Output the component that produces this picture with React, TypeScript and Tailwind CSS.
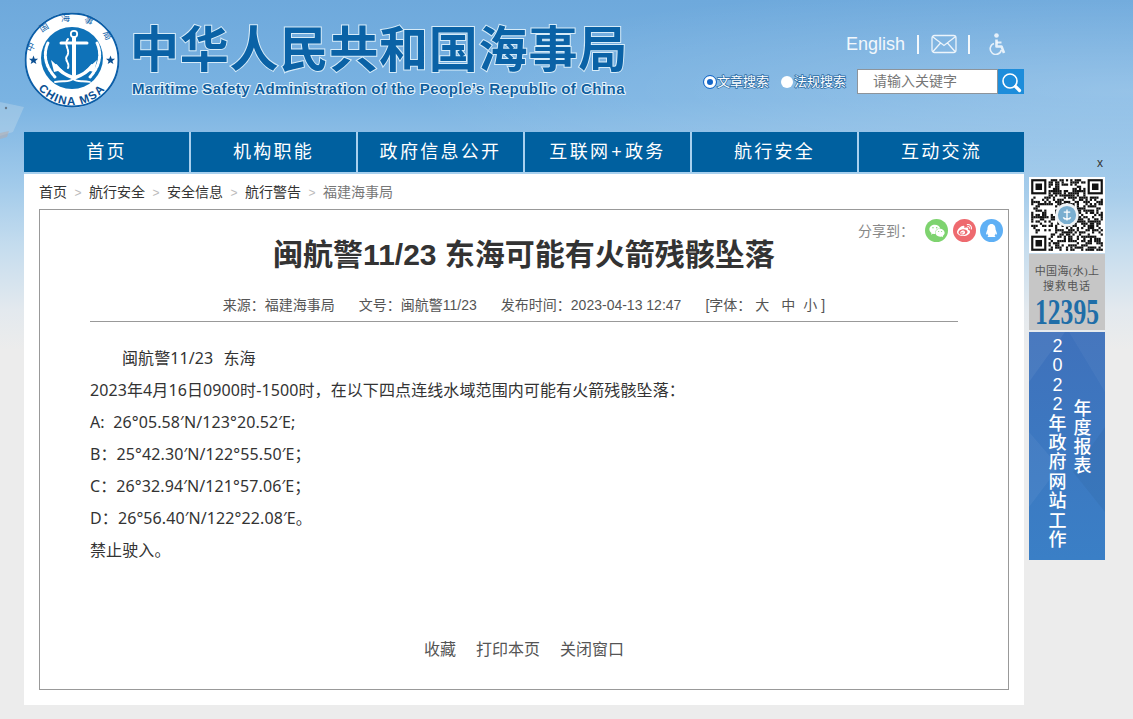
import React from 'react'
import { FaQq, FaWeibo, FaWeixin } from 'react-icons/fa'

const navItems: React.ReactNode[] = [
  '首页',
  '机构职能',
  '政府信息公开',
  <>互联网<span className="mx-[1px]">+</span>政务</>,
  '航行安全',
  '互动交流',
]
const crumbs = ['航行安全', '安全信息', '航行警告']
const bodyLines = [
  '2023年4月16日0900时-1500时，在以下四点连线水域范围内可能有火箭残骸坠落：',
  'A:  26°05.58′N/123°20.52′E;',
  'B：25°42.30′N/122°55.50′E；',
  'C：26°32.94′N/121°57.06′E；',
  'D：26°56.40′N/122°22.08′E。',
  '禁止驶入。',
]

const MsaLogo = ({ size = 96 }: { size?: number }) => (
  <svg width={size} height={size} viewBox="0 0 96 96">
    <defs>
      <path id="logoTop" d="M 8.5 48 A 39.5 39.5 0 0 1 87.5 48" />
      <path id="logoBottom" d="M 5 50 A 43 43 0 0 0 91 50" />
    </defs>
    <circle cx="48" cy="48" r="47.5" fill="#fff" />
    <circle cx="48" cy="48" r="46.5" fill="none" stroke="#0b5ea8" strokeWidth="2" />
    <circle cx="48" cy="46" r="31" fill="#0f72b8" />
    <text fontSize="9" fill="#0b5ea8" fontFamily="'Noto Sans CJK SC',sans-serif">
      <textPath href="#logoTop" startOffset="50%" textAnchor="middle" letterSpacing="13">中国海事局</textPath>
    </text>
    <text fontSize="11.5" fontWeight="700" fill="#0b4f92" fontFamily="'Liberation Sans',sans-serif">
      <textPath href="#logoBottom" startOffset="50%" textAnchor="middle" letterSpacing="1.4">CHINA MSA</textPath>
    </text>
    <polygon points="9,44 10.2,47.2 13.6,47.3 10.9,49.4 11.9,52.6 9,50.7 6.2,52.6 7.1,49.4 4.5,47.3 7.8,47.2" fill="#0b4f92" transform="translate(0.5 -0.5)" />
    <polygon points="87,44 88.2,47.2 91.6,47.3 88.9,49.4 89.9,52.6 87,50.7 84.2,52.6 85.1,49.4 82.5,47.3 85.8,47.2" fill="#0b4f92" transform="translate(-0.5 -0.5)" />
    <g fill="none" stroke="#fff" strokeLinecap="round">
      <circle cx="50" cy="22" r="3.2" strokeWidth="1.8" />
      <path d="M50 26V63" strokeWidth="4" />
      <path d="M37 31H63" strokeWidth="3" />
      <path d="M32 54C37 61 44 64 50 66C56 64 63 61 68 54" strokeWidth="3.6" />
      <path d="M44 27C39 33 47 38 43 44C40 48 46 51 44 56" strokeWidth="2" strokeDasharray="2.4 1.2" />
      <path d="M24 31C19 42 21 54 31 65" strokeWidth="3" strokeDasharray="3 1.4" />
      <path d="M73 31C78 42 76 54 66 65" strokeWidth="3" strokeDasharray="3 1.4" />
      <path d="M31 70C40 68 44 71 49 67C54 71 58 68 66 70" strokeWidth="1.8" />
    </g>
    <polygon points="27,48 38,58 30,60" fill="#fff" />
    <polygon points="73,48 62,58 70,60" fill="#fff" />
  </svg>
)

const QrCode = () => {
  const n = 33
  const cells: React.ReactNode[] = []
  const inFinder = (x: number, y: number) =>
    (x < 8 && y < 8) || (x > n - 9 && y < 8) || (x < 8 && y > n - 9)
  for (let y = 0; y < n; y++) {
    for (let x = 0; x < n; x++) {
      if (inFinder(x, y)) continue
      const h = Math.sin(x * 12.9898 + y * 78.233) * 43758.5453
      if (h - Math.floor(h) > 0.52) {
        cells.push(<rect key={`${x}-${y}`} x={x} y={y} width="1.02" height="1.02" fill="#111" />)
      }
    }
  }
  const finder = (x: number, y: number) => (
    <g key={`f${x}${y}`}>
      <rect x={x} y={y} width="7" height="7" fill="#111" />
      <rect x={x + 1} y={y + 1} width="5" height="5" fill="#fff" />
      <rect x={x + 2} y={y + 2} width="3" height="3" fill="#111" />
    </g>
  )
  return (
    <svg width="76" height="76" viewBox="-1 -1 35 35" className="block bg-white">
      {cells}
      {finder(0, 0)}
      {finder(n - 7, 0)}
      {finder(0, n - 7)}
      <circle cx="16.5" cy="16.5" r="5.4" fill="#eef2f5" />
      <circle cx="16.5" cy="16.5" r="4.2" fill="#79aed0" />
      <path d="M16.5 14V19M15 15.2H18M14.8 17.6C15.3 18.7 17.7 18.7 18.2 17.6" fill="none" stroke="#fff" strokeWidth="0.6" />
    </svg>
  )
}

const App = () => {
  return (
    <div className="relative min-h-[719px] overflow-hidden bg-[linear-gradient(180deg,#6ea9dc_0px,#7ab3e2_100px,#9fc9ea_180px,#c4dcee_245px,#e3e9ee_310px,#ececec_350px)] font-['Liberation_Sans','Noto_Sans_CJK_SC',sans-serif] text-[#333]">
      <div className="absolute inset-x-0 top-0 h-[260px] bg-[radial-gradient(ellipse_at_100%_35%,rgba(255,255,255,0.22),rgba(255,255,255,0)_45%)]" />
      <svg className="absolute left-0 top-[98px]" width="24" height="42" viewBox="0 0 24 42">
        <polygon points="0,4 24,9 13,34 0,38" fill="#d8e3ec" opacity="0.3" />
        <polygon points="0,35 9,33 7,39 0,41" fill="#b7a9a8" opacity="0.5" />
        <circle cx="6" cy="10" r="1.2" fill="#67788a" />
      </svg>

      <div className="relative flex">
        <div className="ml-6 w-[1000px]">
          <header className="flex h-[132px] justify-between">
            <div className="flex">
              <div className="pt-[12px]">
                <MsaLogo />
              </div>
              <div className="ml-[10px] pt-[21px]">
                <div className="whitespace-nowrap text-[49px] font-bold leading-[59px] tracking-[0.8px] text-[#0a62a6] [-webkit-text-stroke:2px_#d6ebf8] [paint-order:stroke_fill]">
                  中华人民共和国海事局
                </div>
                <div className="whitespace-nowrap pl-[2px] text-[15px] font-bold leading-[18px] tracking-[0.48px] text-[#0f5f9f] [-webkit-text-stroke:2px_#e8f4fb] [paint-order:stroke_fill]">
                  Maritime Safety Administration of the People’s Republic of China
                </div>
              </div>
            </div>

            <div className="flex flex-col items-end">
              <div className="mr-[17px] mt-[32px] flex h-[24px] items-center text-[18px] text-white/90">
                <span>English</span>
                <span className="ml-[12px] h-[19px] w-[2px] bg-white/90" />
                <svg className="ml-[12px]" width="26" height="20" viewBox="0 0 26 20" fill="none" stroke="#fff" strokeOpacity="0.85" strokeWidth="1.3">
                  <rect x="1" y="1.5" width="24" height="17" rx="2.5" />
                  <path d="M2 3L13 11.5L24 3M2 17.5L9.5 9M24 17.5L16.5 9" />
                </svg>
                <span className="ml-[11px] h-[19px] w-[2px] bg-white/90" />
                <svg className="ml-[19px]" width="18" height="22" viewBox="0 0 18 22" fill="none" stroke="#fff" strokeOpacity="0.8">
                  <circle cx="7.5" cy="2.5" r="2.3" fill="#fff" fillOpacity="0.8" stroke="none" />
                  <path d="M7.5 6.5V13.5H12.5L15 20" strokeWidth="2.6" strokeLinejoin="round" />
                  <path d="M7.5 9.5H12.5" strokeWidth="2" />
                  <path d="M5 10.5A5.6 5.6 0 1 0 12.3 17" strokeWidth="1.6" />
                </svg>
              </div>
              <div className="mt-[13px] flex items-center">
                <label className="flex items-center text-[13px] text-white [-webkit-text-stroke:1.5px_#2d6ea6] [paint-order:stroke_fill]">
                  <span className="box-border h-[12px] w-[12px] rounded-full border-[3px] border-white bg-[#1466c8] outline outline-1 outline-[#1466c8]" />
                  <span className="ml-[1px]">文章搜索</span>
                </label>
                <label className="ml-[12px] flex items-center text-[13px] text-white [-webkit-text-stroke:1.5px_#2d6ea6] [paint-order:stroke_fill]">
                  <span className="h-[12px] w-[12px] rounded-full bg-white" />
                  <span className="ml-[1px]">法规搜索</span>
                </label>
                <div className="ml-[11px] flex h-[25px] w-[141px] items-center border border-[#8d949b] bg-white pl-[15px] text-[14px] text-[#777]">
                  请输入关键字
                </div>
                <div className="flex h-[25px] w-[26px] items-center justify-center bg-[#1d8ddb]">
                  <svg width="22" height="22" viewBox="0 0 22 22" fill="none" stroke="#fff" strokeLinecap="round">
                    <circle cx="10" cy="10" r="7" strokeWidth="1.6" />
                    <path d="M15.5 15.5L19.5 19.5" strokeWidth="3.2" />
                  </svg>
                </div>
              </div>
            </div>
          </header>

          <nav className="flex h-[40px] bg-[#a8d0ee]">
            {navItems.map((item, index) => (
              <div
                key={index}
                className={`flex h-full flex-1 items-center justify-center bg-[#00609f] pt-px text-[18px] tracking-[2.3px] text-white ${index < navItems.length - 1 ? 'mr-[2px]' : ''}`}
              >
                {item}
              </div>
            ))}
          </nav>
          <div className="h-[2px] bg-[#a8d0ee]" />

          <main className="h-[531px] bg-white px-[15px]">
            <div className="flex h-[35px] items-center pt-[2px] text-[14px] text-[#333]">
              <span>首页</span>
              {crumbs.map((crumb) => (
                <React.Fragment key={crumb}>
                  <span className="mx-[7.5px] text-[12px] text-[#bbb]">&gt;</span>
                  <span>{crumb}</span>
                </React.Fragment>
              ))}
              <span className="mx-[7.5px] text-[12px] text-[#bbb]">&gt;</span>
              <span className="text-[#777]">福建海事局</span>
            </div>

            <article className="relative h-[481px] border border-[#999] px-[50px]">
              <div className="absolute right-[5px] top-[9px] flex items-center">
                <span className="mr-[11px] mt-px text-[14px] text-[#888]">分享到：</span>
                <span className="flex h-[23px] w-[23px] items-center justify-center rounded-full bg-[#7ed36f] text-white">
                  <FaWeixin size={16} />
                </span>
                <span className="ml-[5px] flex h-[23px] w-[23px] items-center justify-center rounded-full bg-[#ee6a6f] text-white">
                  <FaWeibo size={15} />
                </span>
                <span className="ml-[4px] flex h-[23px] w-[23px] items-center justify-center rounded-full bg-[#5fb0f5] text-white">
                  <FaQq size={13} />
                </span>
              </div>

              <h1 className="pt-[24px] text-center text-[30px] font-bold leading-[42px] text-[#333]">
                闽航警11/23 东海可能有火箭残骸坠落
              </h1>
              <div className="mt-[19px] flex h-[20px] items-center justify-center text-[14px] text-[#555]">
                <span>来源：福建海事局</span>
                <span className="ml-[24px]">文号：闽航警11/23</span>
                <span className="ml-[24px]">发布时间：2023-04-13 12:47</span>
                <span className="ml-[24px]">[字体：</span>
                <span className="ml-[4px]">大</span>
                <span className="ml-[12px]">中</span>
                <span className="ml-[8px]">小</span>
                <span className="ml-[4px]">]</span>
              </div>
              <div className="mt-[6px] h-px bg-[#999]" />

              <div className="mt-[20px] whitespace-pre font-['Noto_Sans','Noto_Sans_CJK_SC',sans-serif] text-[16px] leading-[32px] tracking-[0.1px] text-[#333]">
                <p className="indent-[32px]">闽航警11/23<span className="ml-[10px]">东海</span></p>
                {bodyLines.map((line) => (
                  <p key={line}>{line}</p>
                ))}
              </div>

              <div className="mt-[68px] flex justify-center gap-[20px] text-[16px] leading-[32px] text-[#555]">
                <span>收藏</span>
                <span>打印本页</span>
                <span>关闭窗口</span>
              </div>
            </article>
          </main>
        </div>

        <aside className="ml-[5px] w-[76px] pt-[156px]">
          <div className="h-[21px] pr-[2px] text-right text-[12px] leading-[14px] text-[#333]">x</div>
          <QrCode />
          <div className="mt-px h-[76px] bg-[#c6c6c6] pt-[10px] text-center font-['Liberation_Serif','Noto_Sans_CJK_SC',serif] text-[11px] leading-[15px] text-[#555]">
            <div className="tracking-[0.3px]">中国海(水)上</div>
            <div className="tracking-[1px]">搜救电话</div>
            <div className="-mx-[8px] mt-[3px] scale-x-[0.73] text-[35px] font-bold leading-[32px] text-[#1f6ea8]">12395</div>
          </div>
          <div className="relative mt-[2px] flex h-[228px] justify-center gap-[7px] overflow-hidden bg-[linear-gradient(180deg,#3f71bb,#3a7fc6)] pl-[6px] text-[18px] font-medium leading-[19px] text-white">
            <svg className="absolute inset-0" width="76" height="228" viewBox="0 0 76 228">
              <polygon points="0,0 36,0 0,50" fill="#fff" opacity="0.06" />
              <polygon points="40,0 76,0 76,60" fill="#fff" opacity="0.04" />
              <polygon points="0,100 30,135 0,175" fill="#fff" opacity="0.05" />
              <polygon points="76,95 44,140 76,180" fill="#000" opacity="0.04" />
            </svg>
            <div className="relative flex flex-col items-center pt-[5px]">
              {'2022年政府网站工作'.split('').map((ch, i) => (
                <span key={i} className="block h-[19.4px]">{ch}</span>
              ))}
            </div>
            <div className="relative flex flex-col items-center pt-[68px]">
              {'年度报表'.split('').map((ch, i) => (
                <span key={i} className="block h-[19px]">{ch}</span>
              ))}
            </div>
          </div>
        </aside>
      </div>
    </div>
  )
}

export default App
